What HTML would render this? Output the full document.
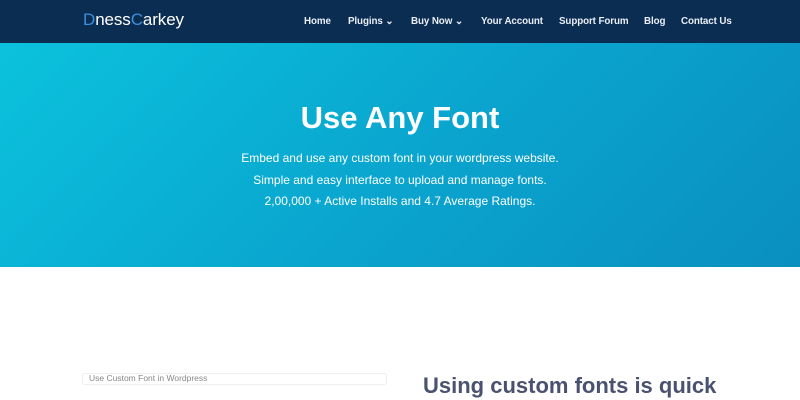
<!DOCTYPE html>
<html><head><style>
*{margin:0;padding:0;box-sizing:border-box}
body{width:800px;height:400px;overflow:hidden;font-family:"Liberation Sans",sans-serif;background:#fff}
.nav{height:43px;background:#0c2d52;position:relative}
.logo{position:absolute;left:83px;top:10px;font-size:17px;color:#fff;letter-spacing:-0.1px}
.logo b{font-weight:normal;color:#3a8fe0}
.menu{position:absolute;top:16px;font-size:9.8px;font-weight:bold;color:#e8eef5;letter-spacing:-0.1px}
.menu span{position:absolute;white-space:nowrap}
.hero{height:224px;background:linear-gradient(135deg,#0bc2dc 0%,#0aa6cf 50%,#0a8fc0 100%);text-align:center;color:#fff}
.hero h1{font-size:31px;font-weight:bold;padding-top:57px;line-height:36px}
.hero p{font-size:12px;line-height:21.5px}
.hero .t{margin-top:12px}
.img{position:absolute;left:82px;top:373px;width:305px;height:12px;border:1px solid #eee;border-radius:3px;font-size:8.5px;color:#888;padding-left:6px;line-height:9px}
h2{position:absolute;left:423px;top:373px;font-size:22px;color:#4a5270;font-weight:bold;white-space:nowrap}
</style></head><body>
<div class="nav">
<div class="logo"><b>D</b>ness<b>C</b>arkey</div>
<div class="menu">
<span style="left:304px">Home</span>
<span style="left:348px">Plugins ⌄</span>
<span style="left:411px">Buy Now ⌄</span>
<span style="left:481px">Your Account</span>
<span style="left:559px">Support Forum</span>
<span style="left:644px">Blog</span>
<span style="left:681px">Contact Us</span>
</div>
</div>
<div class="hero">
<h1>Use Any Font</h1>
<p class="t">Embed and use any custom font in your wordpress website.</p>
<p>Simple and easy interface to upload and manage fonts.</p>
<p>2,00,000 + Active Installs and 4.7 Average Ratings.</p>
</div>
<div class="img">Use Custom Font in Wordpress</div>
<h2>Using custom fonts is quick</h2>
</body></html>
